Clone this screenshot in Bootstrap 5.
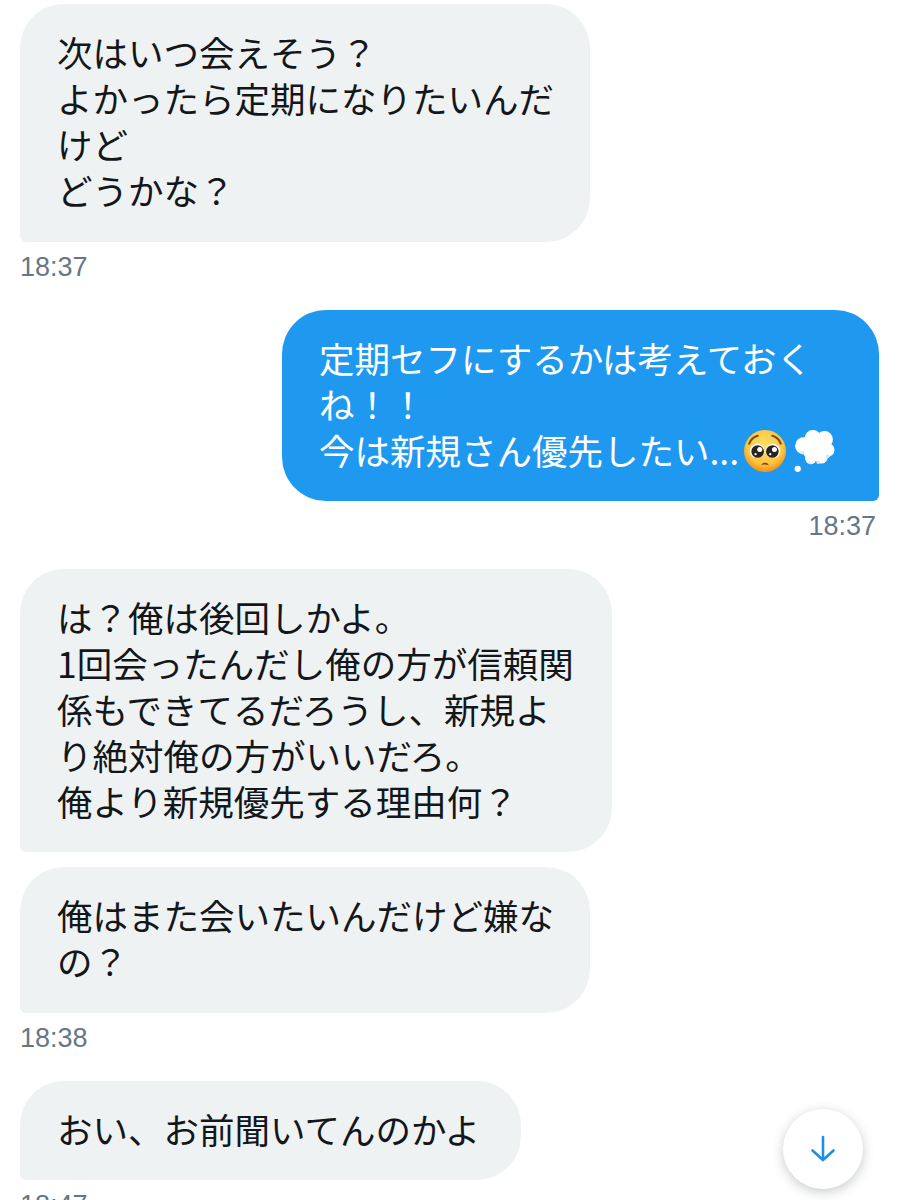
<!DOCTYPE html>
<html lang="ja">
<head>
    <meta charset="UTF-8">
    <meta name="viewport" content="width=device-width, initial-scale=1.0">
    <title>Messages</title>
    <link href="https://cdn.jsdelivr.net/npm/bootstrap@5.3.0/dist/css/bootstrap.min.css" rel="stylesheet">
    <style>
        html, body { height: 1200px; overflow: hidden; }
        body {
            background: #fff;
            font-family: "Liberation Sans", "Noto Sans CJK JP", sans-serif;
        }
        .chat-wrap { padding: 4px 19px 0 20px; height: 1200px; overflow: hidden; }
        .bubble {
            font-family: "Noto Sans CJK JP", sans-serif;
            font-size: 35.500px;
            line-height: 46px;
            color: #14171a;
            padding: 25px 10px 28px 37px;
            border-radius: 44px;
            white-space: nowrap;
        }
        .bubble-in { background: #eff2f3; border-bottom-left-radius: 6px; }
        .bubble-out { background: #1f98f0; color: #fff; border-bottom-right-radius: 6px; }
        .bubble-tall { padding-bottom: 29px; }
        .w-570 { width: 570px; }
        .w-597 { width: 597px; }
        .w-592 { width: 592px; }
        .w-501 { width: 501px; }
        .stamp {
            font-size: 27px;
            line-height: 30px;
            color: #657786;
            margin-top: 10px;
            flex-shrink: 0;
        }
        .stamp-out { margin-right: 3px; }
        .gap-near { margin-top: 15px; }
        .gap-wide { margin-top: 28px; }
        .emoji { width: 42px; height: 42px; vertical-align: -7px; }
        .emoji-face { margin-left: 5px; }
        .emoji-gap { margin-left: 7px; }
        .scroll-down {
            position: absolute;
            left: 783px;
            top: 1109px;
            width: 80px;
            height: 80px;
            padding: 0;
            border: 0;
            border-radius: 50%;
            background: #fff;
            box-shadow: 0 3px 12px rgba(60, 70, 80, .28);
        }
    </style>
</head>
<body>

<div class="chat-wrap d-flex flex-column align-items-start">
    <div class="bubble bubble-in bubble-tall w-570">次はいつ会えそう？<br>よかったら定期になりたいんだ<br>けど<br>どうかな？</div>
    <div class="stamp">18:37</div>

    <div class="bubble bubble-out w-597 align-self-end gap-wide">定期セフにするかは考えておく<br>ね！！<br>今は新規さん優先したい...<svg class="emoji emoji-face" viewBox="0 0 40 40" role="img" aria-label="pleading face">
            <defs>
                <radialGradient id="faceFill" cx="50%" cy="38%" r="62%">
                    <stop offset="0" stop-color="#ffe36b"/>
                    <stop offset=".7" stop-color="#fcc43c"/>
                    <stop offset="1" stop-color="#ef8f1e"/>
                </radialGradient>
            </defs>
            <circle cx="20" cy="20" r="20" fill="url(#faceFill)"/>
            <path d="M5 13c1.500-4 4-6.500 8-7.500M35 13c-1.500-4-4-6.500-8-7.500" fill="none" stroke="#7a4a12" stroke-width="2" stroke-linecap="round"/>
            <circle cx="12.500" cy="20" r="7" fill="#fff"/>
            <circle cx="27.500" cy="20" r="7" fill="#fff"/>
            <circle cx="13" cy="20.500" r="6" fill="#2b2320"/>
            <circle cx="27" cy="20.500" r="6" fill="#2b2320"/>
            <circle cx="15" cy="18.500" r="2.400" fill="#fff"/>
            <circle cx="29" cy="18.500" r="2.400" fill="#fff"/>
            <circle cx="11" cy="23" r="1.100" fill="#fff"/>
            <circle cx="25" cy="23" r="1.100" fill="#fff"/>
            <path d="M16.500 33.500c1-3 6-3 7 0-2-1-5-1-7 0z" fill="#7a3d12"/>
        </svg><svg class="emoji emoji-gap" viewBox="0 0 40 40" role="img" aria-label="thought balloon">
            <g fill="#fff">
                <circle cx="10" cy="15" r="8"/>
                <circle cx="19" cy="8" r="8"/>
                <circle cx="30" cy="9" r="8"/>
                <circle cx="33" cy="19" r="6.500"/>
                <circle cx="20" cy="18" r="11"/>
                <circle cx="27" cy="26" r="6"/>
                <circle cx="17" cy="27" r="5.500"/>
                <circle cx="4.500" cy="37" r="3"/>
            </g>
            <g fill="#e3e7ea">
                <circle cx="24" cy="30.500" r="1.800"/>
                <circle cx="33" cy="25" r="1.800"/>
                <circle cx="9" cy="21.500" r="1.800"/>
                <circle cx="16" cy="31" r="1.500"/>
            </g>
        </svg></div>
    <div class="stamp stamp-out align-self-end">18:37</div>

    <div class="bubble bubble-in w-592 gap-wide">は？俺は後回しかよ。<br>1回会ったんだし俺の方が信頼関<br>係もできてるだろうし、新規よ<br>り絶対俺の方がいいだろ。<br>俺より新規優先する理由何？</div>
    <div class="bubble bubble-in bubble-tall w-570 gap-near">俺はまた会いたいんだけど嫌な<br>の？</div>
    <div class="stamp">18:38</div>

    <div class="bubble bubble-in w-501 gap-wide">おい、お前聞いてんのかよ</div>
    <div class="stamp">18:47</div>
</div>

<button class="scroll-down d-flex align-items-center justify-content-center" type="button" aria-label="Scroll to latest">
    <svg width="26" height="28" viewBox="0 0 26 28" fill="none" stroke="#1f8fe6" stroke-width="2.600" stroke-linecap="round" stroke-linejoin="round">
        <path d="M13 2v23"/>
        <path d="M2.500 15.500 13 25l10.500-9.500"/>
    </svg>
</button>

<script src="https://cdn.jsdelivr.net/npm/bootstrap@5.3.0/dist/js/bootstrap.bundle.min.js"></script>
</body>
</html>
